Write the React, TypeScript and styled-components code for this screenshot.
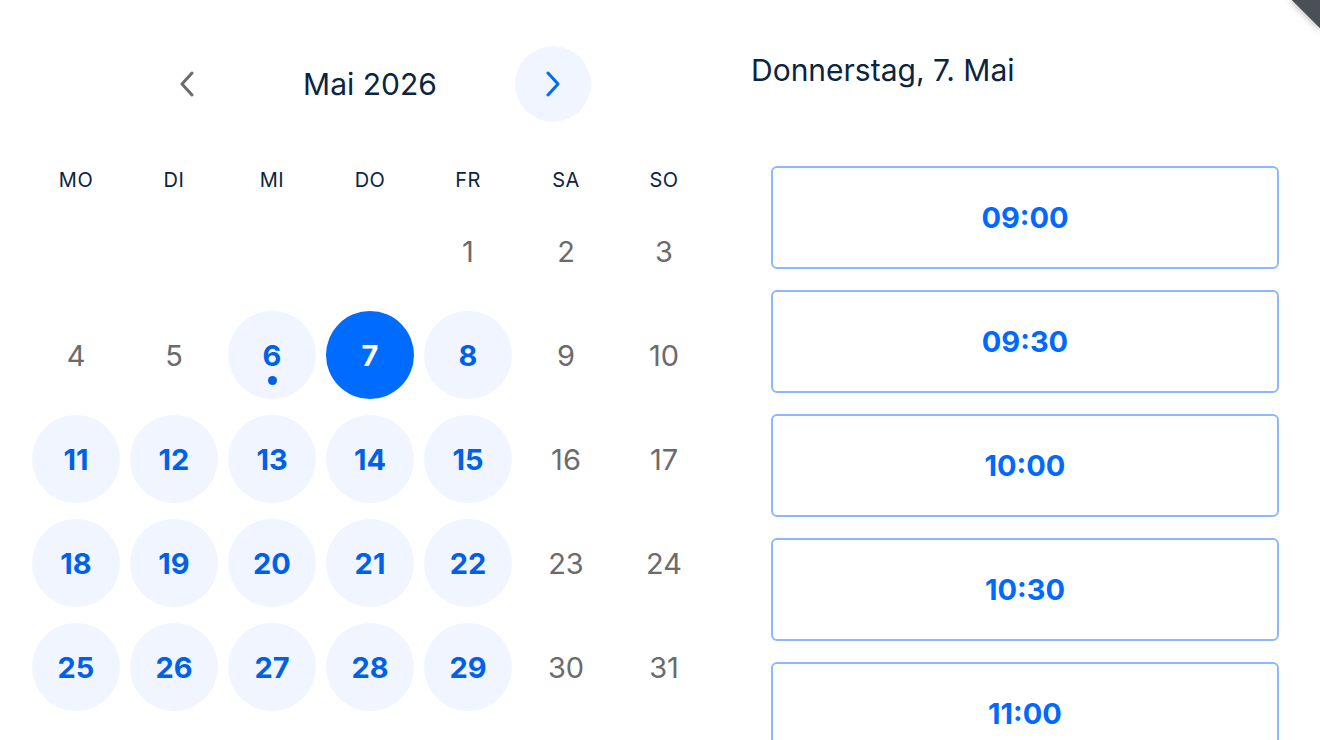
import { FC } from "react";
import styled, { createGlobalStyle } from "styled-components";

const GlobalStyle = createGlobalStyle`
  html, body {
    margin: 0;
    padding: 0;
    background: #ffffff;
    font-family: Inter, Lato, "Noto Sans", sans-serif;
  }
  * { box-sizing: border-box; }
`;

const Page = styled.div`
  position: relative;
  width: 1320px;
  height: 740px;
  overflow: hidden;
  display: flex;
  background: #fff;
`;

const Corner = styled.div`
  position: absolute;
  top: -20px;
  right: -20px;
  width: 40px;
  height: 40px;
  background: #4b4f56;
  transform: rotate(45deg);
  box-shadow: 0 0 8px rgba(0, 0, 0, 0.35);
`;

const CalendarPanel = styled.section`
  padding: 46px 0 0 27px;
  width: 726px;
  flex-shrink: 0;
`;

const MonthNav = styled.div`
  display: flex;
  align-items: center;
  justify-content: center;
  height: 76px;
  width: 686px;
`;

const NavButton = styled.button<{ $active?: boolean }>`
  width: 76px;
  height: 76px;
  border-radius: 50%;
  border: none;
  padding: 0;
  display: flex;
  align-items: center;
  justify-content: center;
  background: ${(p) => (p.$active ? "#f0f5ff" : "transparent")};
  color: ${(p) => (p.$active ? "#0069ff" : "#6b6b6b")};
  cursor: pointer;
`;

const MonthTitle = styled.h2`
  margin: 0;
  width: 290px;
  text-align: center;
  font-size: 30px;
  font-weight: 400;
  color: #0a2540;
`;

const WeekdayRow = styled.div`
  display: grid;
  grid-template-columns: repeat(7, 98px);
  margin-top: 39px;
  height: 38px;
  align-items: center;
`;

const Weekday = styled.div`
  text-align: center;
  font-size: 20px;
  letter-spacing: 0.5px;
  color: #0a2540;
`;

const DayGrid = styled.div`
  display: grid;
  grid-template-columns: repeat(7, 98px);
  grid-auto-rows: 104px;
`;

const Cell = styled.div`
  display: flex;
  align-items: center;
  justify-content: center;
`;

const Day = styled.button<{ $state: "none" | "open" | "selected" }>`
  position: relative;
  width: 88px;
  height: 88px;
  border-radius: 50%;
  border: none;
  padding: 0;
  font-family: inherit;
  font-size: 29px;
  font-weight: ${(p) => (p.$state === "none" ? 400 : 700)};
  color: ${(p) =>
    p.$state === "selected" ? "#ffffff" : p.$state === "open" ? "#0060e6" : "#6b6b6b"};
  background: ${(p) =>
    p.$state === "selected" ? "#006bff" : p.$state === "open" ? "#f0f5ff" : "transparent"};
  cursor: ${(p) => (p.$state === "none" ? "default" : "pointer")};
`;

const TodayDot = styled.span`
  position: absolute;
  left: 50%;
  bottom: 14px;
  width: 9px;
  height: 9px;
  margin-left: -4.5px;
  border-radius: 50%;
  background: #0060e6;
`;

const SlotPanel = styled.section`
  flex: 1;
  padding: 52px 41px 0 25px;
  display: flex;
  flex-direction: column;
`;

const DateTitle = styled.h3`
  margin: 0;
  height: 36px;
  line-height: 36px;
  font-size: 30px;
  font-weight: 400;
  color: #0a2540;
`;

const SlotList = styled.div`
  margin-top: 78px;
  padding-left: 20px;
  display: flex;
  flex-direction: column;
  gap: 21px;
`;

const Slot = styled.button`
  height: 103px;
  width: 100%;
  flex-shrink: 0;
  border: 2px solid #8db8ff;
  border-radius: 6px;
  background: #fff;
  font-family: inherit;
  font-size: 29px;
  font-weight: 700;
  color: #0069ff;
  cursor: pointer;
`;

const Chevron: FC<{ dir: "left" | "right" }> = ({ dir }) => (
  <svg width="18" height="26" viewBox="0 0 18 26" fill="none">
    <path
      d={dir === "left" ? "M14 2 L4 13 L14 24" : "M4 2 L14 13 L4 24"}
      stroke="currentColor"
      strokeWidth="3"
      strokeLinecap="round"
      strokeLinejoin="round"
    />
  </svg>
);

const weekdays = ["MO", "DI", "MI", "DO", "FR", "SA", "SO"];
const openDays = [6, 8, 11, 12, 13, 14, 15, 18, 19, 20, 21, 22, 25, 26, 27, 28, 29];
const selectedDay = 7;
const today = 6;
const slots = ["09:00", "09:30", "10:00", "10:30", "11:00"];

const App: FC = () => {
  const cells: (number | null)[] = [null, null, null, null];
  for (let d = 1; d <= 31; d++) cells.push(d);

  return (
    <>
      <GlobalStyle />
      <Page>
        <CalendarPanel>
          <MonthNav>
            <NavButton aria-label="Vorheriger Monat">
              <Chevron dir="left" />
            </NavButton>
            <MonthTitle>Mai 2026</MonthTitle>
            <NavButton $active aria-label="Nächster Monat">
              <Chevron dir="right" />
            </NavButton>
          </MonthNav>
          <WeekdayRow>
            {weekdays.map((w) => (
              <Weekday key={w}>{w}</Weekday>
            ))}
          </WeekdayRow>
          <DayGrid>
            {cells.map((d, i) => (
              <Cell key={i}>
                {d !== null && (
                  <Day
                    $state={
                      d === selectedDay ? "selected" : openDays.includes(d) ? "open" : "none"
                    }
                  >
                    {d}
                    {d === today && <TodayDot />}
                  </Day>
                )}
              </Cell>
            ))}
          </DayGrid>
        </CalendarPanel>
        <SlotPanel>
          <DateTitle>Donnerstag, 7. Mai</DateTitle>
          <SlotList>
            {slots.map((s) => (
              <Slot key={s}>{s}</Slot>
            ))}
          </SlotList>
        </SlotPanel>
        <Corner />
      </Page>
    </>
  );
};

export default App;
